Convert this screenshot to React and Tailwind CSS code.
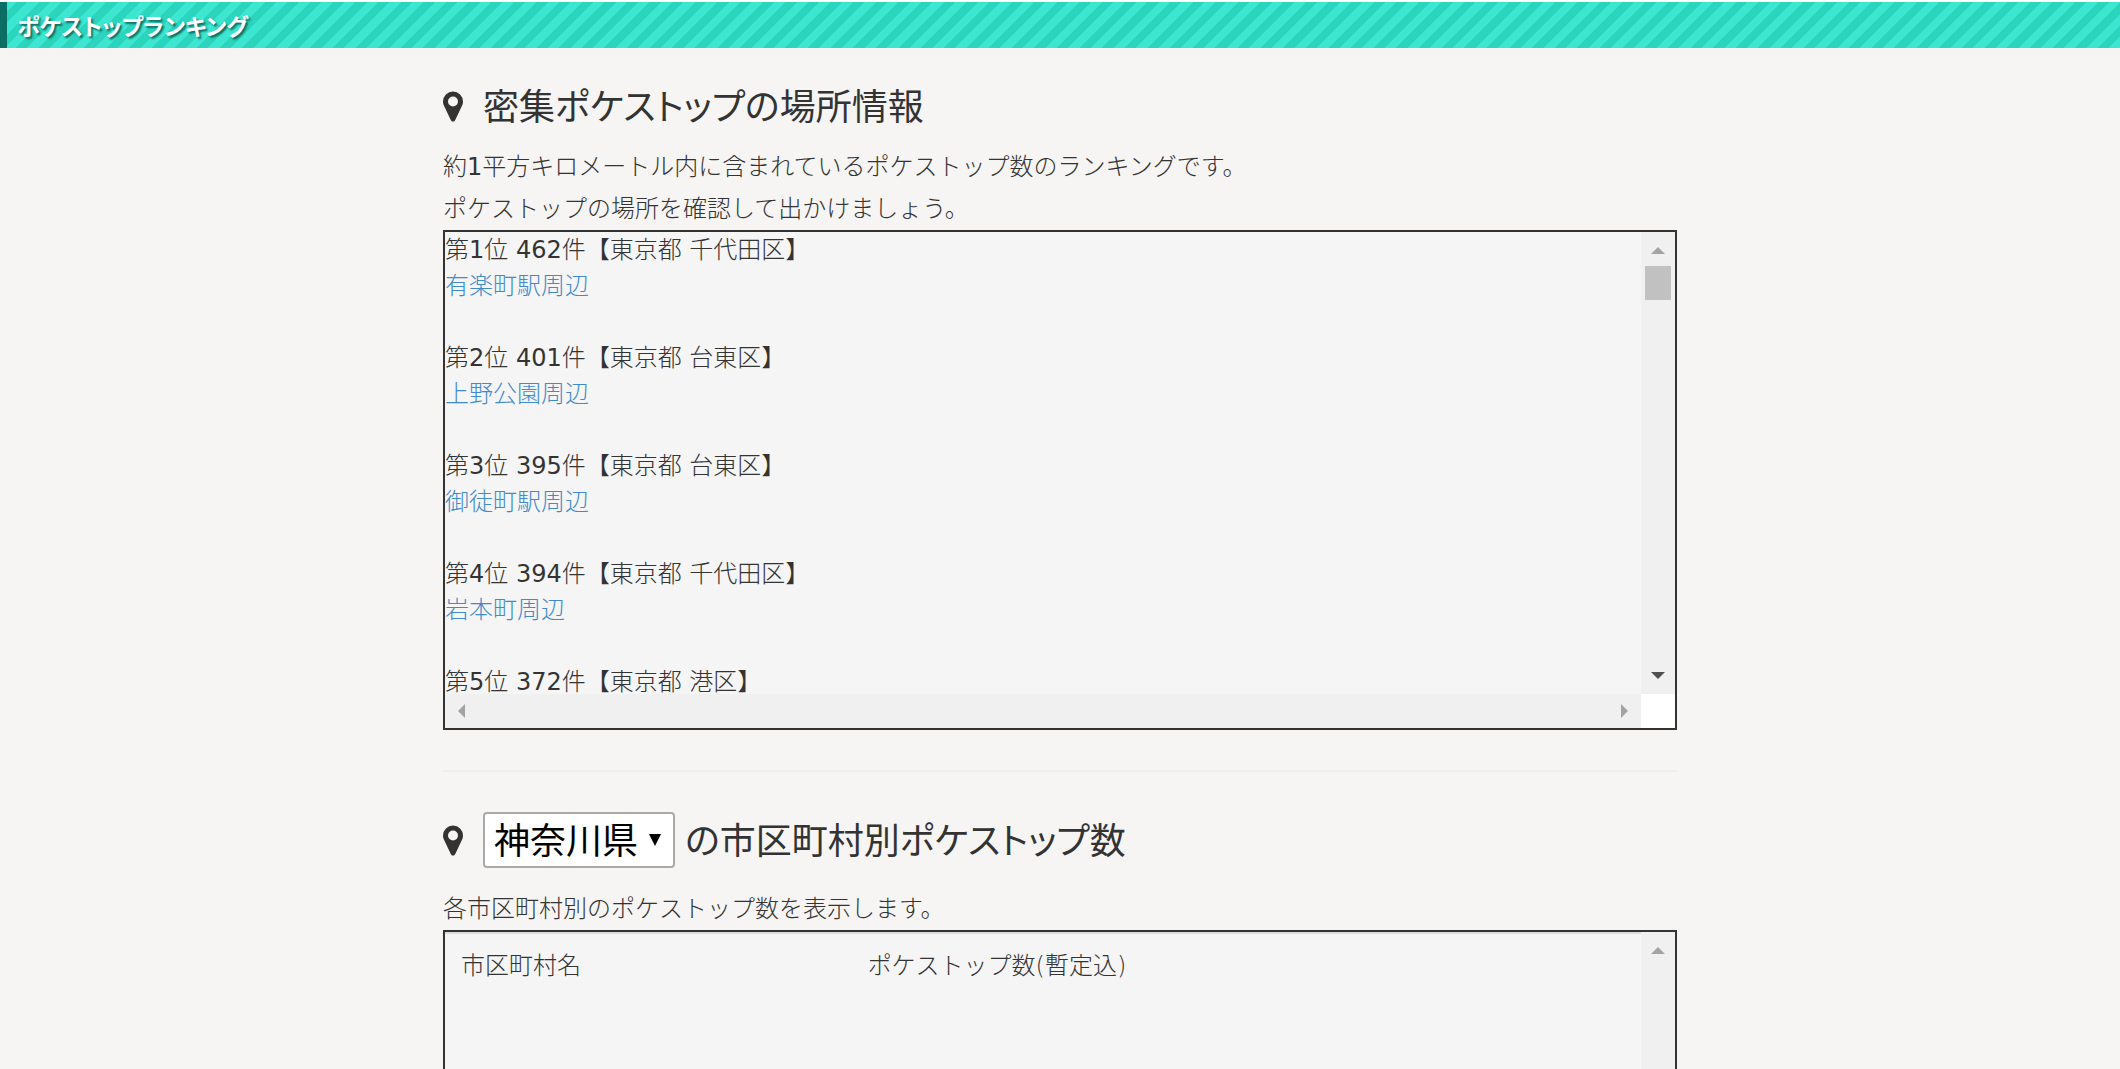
import React from "react";

const spots = [
  { count: 462, area: "東京都 千代田区", name: "有楽町駅周辺" },
  { count: 401, area: "東京都 台東区", name: "上野公園周辺" },
  { count: 395, area: "東京都 台東区", name: "御徒町駅周辺" },
  { count: 394, area: "東京都 千代田区", name: "岩本町周辺" },
  { count: 372, area: "東京都 港区" },
];

const MapMarker = () => (
  <svg viewBox="0 0 1024 1536" className="h-[31px] w-5 shrink-0" fill="currentColor" aria-hidden="true">
    <path d="M768 512q0-106-75-181t-181-75-181 75-75 181 75 181 181 75 181-75 75-181zm256 0q0 109-33 179l-364 774q-16 33-47.5 52t-67.5 19-67.5-19-46.5-52l-365-774q-33-70-33-179 0-212 150-362t362-150 362 150 150 362z" />
  </svg>
);

const Arrow = ({ points, className }) => (
  <svg viewBox="0 0 14 14" className={`h-[14px] w-[14px] ${className}`} fill="currentColor" aria-hidden="true">
    <polygon points={points} />
  </svg>
);

// always visible scrollbars, vertical and horizontal
const ScrollBox = ({ children, thumb }) => (
  <div className="grid h-[500px] grid-cols-[1fr_34px] grid-rows-[1fr_34px] border-2 border-[#333] bg-[#f5f5f5]">
    <div className="min-h-0 overflow-hidden">{children}</div>
    <div className="flex flex-col items-center justify-between bg-[#f0f0f0] py-3">
      <div className="flex flex-col items-center gap-2">
        <Arrow points="0,10 7,3 14,10" className="text-[#a3a3a3]" />
        {thumb && <div className="h-[34px] w-[26px] bg-[#c1c1c1]" />}
      </div>
      <Arrow points="0,4 14,4 7,11" className="text-[#505050]" />
    </div>
    <div className="flex items-center justify-between bg-[#f0f0f0] px-[10px]">
      <Arrow points="10,0 3,7 10,14" className="text-[#a3a3a3]" />
      <Arrow points="4,0 11,7 4,14" className="text-[#a3a3a3]" />
    </div>
    <div className="bg-white" />
  </div>
);

const Num = ({ children }) => <span className="font-normal">{children}</span>;

const App = () => (
  <div className="min-h-screen bg-[#f6f5f3] font-['DejaVu_Sans','Noto_Sans_CJK_JP',sans-serif] text-2xl font-light text-[#333]">
    <header className="border-t-2 border-white">
      <h1 className="h-[46px] border-l-[7px] border-[#0b6e62] bg-[repeating-linear-gradient(-45deg,#3ce6d0_0px,#3ce6d0_8px,#2bd4bd_8px,#2bd4bd_16px)] pl-[10px] font-['Noto_Sans_CJK_JP',sans-serif] text-[23px] leading-[46px] font-bold text-white [font-feature-settings:'palt'] [text-shadow:2px_2px_2px_#0b6e62]">
        ポケストップランキング
      </h1>
    </header>

    <main className="mx-auto w-full max-w-[1234px]">
      <section className="pt-[38px]">
        <h2 className="mb-5 flex h-10 items-center gap-5 font-['Noto_Sans_CJK_JP',sans-serif] text-4xl font-normal [font-feature-settings:'palt']">
          <MapMarker />
          <span className="pb-1">密集ポケストップの場所情報</span>
        </h2>
        <p className="leading-[42px]">
          約<Num>1</Num>平方キロメートル内に含まれているポケストップ数のランキングです。
        </p>
        <p className="leading-[42px]">ポケストップの場所を確認して出かけましょう。</p>
        <ScrollBox thumb>
          {spots.map((spot, i) => (
            <div key={i} className="mb-9 leading-9 last:mb-0">
              <p>
                第<Num>{i + 1}</Num>位 <Num>{spot.count}</Num>件【{spot.area}】
              </p>
              {spot.name && (
                <a href="#" className="block text-[#428bca]">
                  {spot.name}
                </a>
              )}
            </div>
          ))}
        </ScrollBox>
      </section>

      <hr className="my-10 border-t-2 border-[#eee]" />

      <section>
        <h2 className="mb-5 flex items-center gap-5 font-['Noto_Sans_CJK_JP',sans-serif] text-4xl font-normal [font-feature-settings:'palt']">
          <MapMarker />
          <div className="flex items-center gap-[10px]">
            <div className="relative">
              <select
                aria-label="都道府県"
                defaultValue="神奈川県"
                className="h-14 w-48 appearance-none rounded border-2 border-[#a9a9a9] bg-white pb-1 pl-[9px] text-black"
              >
                <option value="東京都">東京都</option>
                <option value="神奈川県">神奈川県</option>
              </select>
              <svg viewBox="0 0 12 12" className="pointer-events-none absolute top-[22px] right-[14px] h-3 w-3" aria-hidden="true">
                <polygon points="0,0 12,0 6,12" fill="#000" />
              </svg>
            </div>
            <span className="pb-1">の市区町村別ポケストップ数</span>
          </div>
        </h2>
        <p className="leading-[42px]">各市区町村別のポケストップ数を表示します。</p>
        <ScrollBox>
          <table className="w-full border-t-2 border-[#ddd] text-left">
            <thead>
              <tr className="leading-8">
                <th className="w-[34%] p-4 font-light">市区町村名</th>
                <th className="p-4 font-light">ポケストップ数(暫定込)</th>
              </tr>
            </thead>
          </table>
        </ScrollBox>
      </section>
    </main>
  </div>
);

export default App;
